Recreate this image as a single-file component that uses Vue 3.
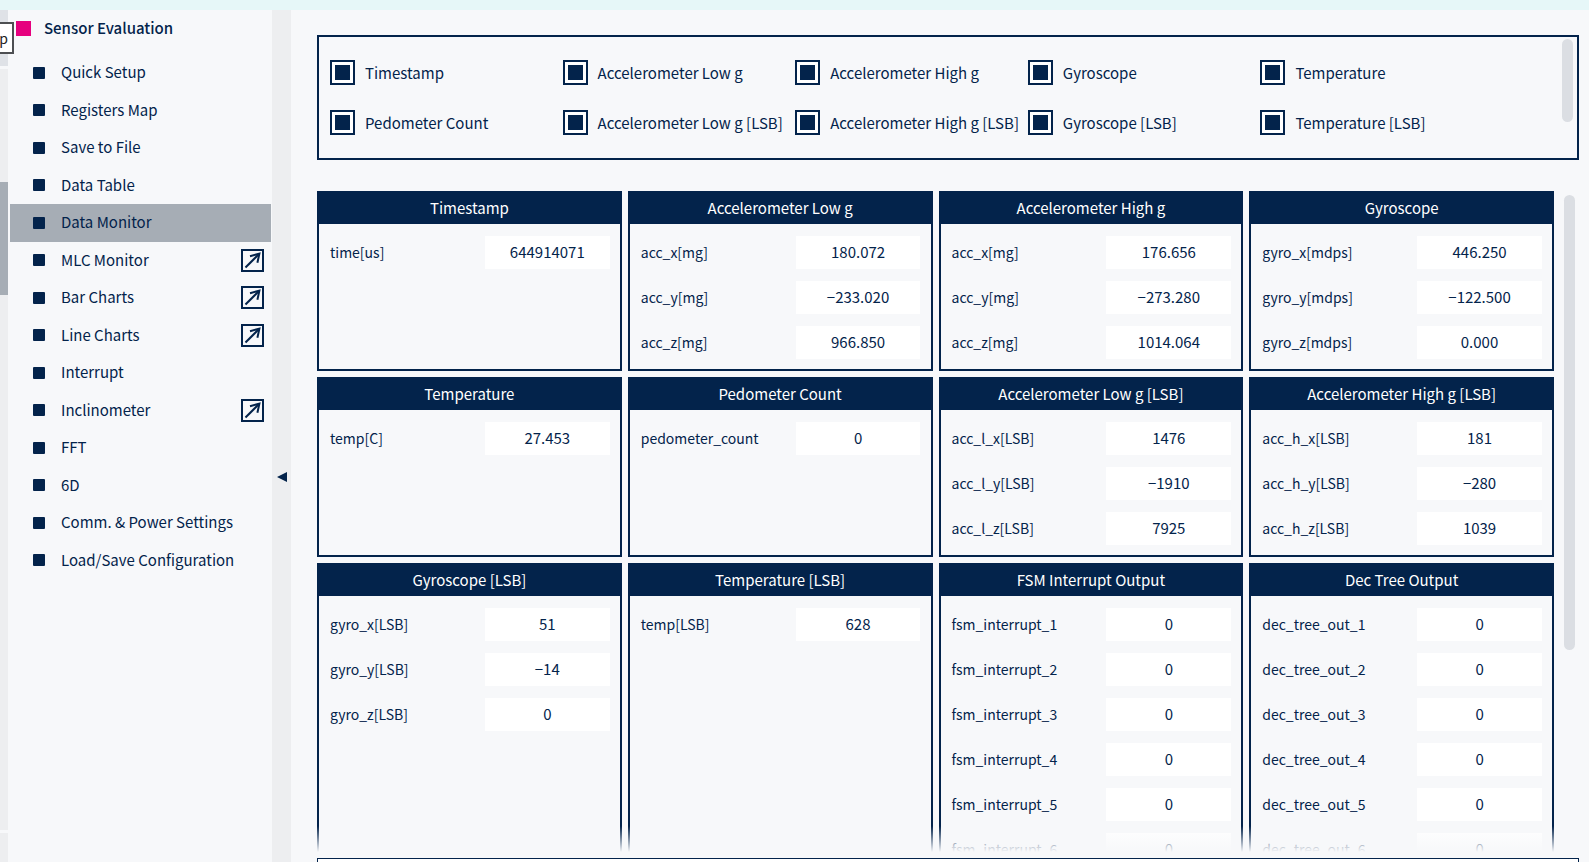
<template>
  <div class="app">
    <div class="top-strip"></div>
    <div class="workspace">
      <div class="outer-rail">
        <div class="rail-head"></div>
        <div class="rail-track">
          <div class="rail-thumb"></div>
        </div>
        <div class="rail-foot"></div>
        <div class="tooltip">p</div>
      </div>

      <aside class="sidebar">
        <h1 class="sidebar-title">Sensor Evaluation</h1>
        <nav class="menu">
          <a
            v-for="item in menu"
            :key="item.name"
            href="#"
            class="menu-item"
            :class="{ active: item.name === current }"
            @click.prevent="current = item.name"
          >
            <span class="bullet"></span>
            <span class="menu-name">{{ item.name }}</span>
            <svg v-if="item.popup" class="popup-icon" viewBox="0 0 23 23" aria-hidden="true">
              <rect x="1" y="1" width="21" height="21" />
              <path class="shaft" d="M4.5 18.5L18 5" />
              <path class="head" d="M9 7.2L18.4 4.6L16.4 13.8" />
            </svg>
          </a>
        </nav>
      </aside>

      <button class="splitter" aria-label="Collapse menu">
        <svg class="splitter-icon" viewBox="0 0 10 10" aria-hidden="true">
          <path d="M10 0V10L0 5Z" />
        </svg>
      </button>

      <main class="monitor">
        <section class="selector">
          <label v-for="name in channels" :key="name" class="channel">
            <input v-model="selected" type="checkbox" :value="name" />
            <span>{{ name }}</span>
          </label>
          <div class="selector-scroll"></div>
        </section>

        <div class="board">
          <div class="cards">
            <section v-for="(card, ci) in cards" :key="card.title" class="card">
              <h2 class="card-title">{{ card.title }}</h2>
              <div class="card-body">
                <div v-for="(row, ri) in card.rows" :key="row[0]" class="field">
                  <label :for="`f-${ci}-${ri}`">{{ row[0] }}</label>
                  <input :id="`f-${ci}-${ri}`" type="text" :value="row[1]" readonly />
                </div>
              </div>
            </section>
          </div>
          <div class="board-scroll"></div>
        </div>

        <div class="log-panel"></div>
      </main>
    </div>
  </div>
</template>

<script setup>
import { ref } from 'vue'

const current = ref('Data Monitor')

const menu = [
  { name: 'Quick Setup' },
  { name: 'Registers Map' },
  { name: 'Save to File' },
  { name: 'Data Table' },
  { name: 'Data Monitor' },
  { name: 'MLC Monitor', popup: true },
  { name: 'Bar Charts', popup: true },
  { name: 'Line Charts', popup: true },
  { name: 'Interrupt' },
  { name: 'Inclinometer', popup: true },
  { name: 'FFT' },
  { name: '6D' },
  { name: 'Comm. & Power Settings' },
  { name: 'Load/Save Configuration' }
]

const channels = [
  'Timestamp',
  'Accelerometer Low g',
  'Accelerometer High g',
  'Gyroscope',
  'Temperature',
  'Pedometer Count',
  'Accelerometer Low g [LSB]',
  'Accelerometer High g [LSB]',
  'Gyroscope [LSB]',
  'Temperature [LSB]'
]
const selected = ref([...channels])

const zeros = (prefix, count) =>
  Array.from({ length: count }, (_, i) => [`${prefix}_${i + 1}`, '0'])

const cards = [
  { title: 'Timestamp', rows: [['time[us]', '644914071']] },
  {
    title: 'Accelerometer Low g',
    rows: [['acc_x[mg]', '180.072'], ['acc_y[mg]', '−233.020'], ['acc_z[mg]', '966.850']]
  },
  {
    title: 'Accelerometer High g',
    rows: [['acc_x[mg]', '176.656'], ['acc_y[mg]', '−273.280'], ['acc_z[mg]', '1014.064']]
  },
  {
    title: 'Gyroscope',
    rows: [['gyro_x[mdps]', '446.250'], ['gyro_y[mdps]', '−122.500'], ['gyro_z[mdps]', '0.000']]
  },
  { title: 'Temperature', rows: [['temp[C]', '27.453']] },
  { title: 'Pedometer Count', rows: [['pedometer_count', '0']] },
  {
    title: 'Accelerometer Low g [LSB]',
    rows: [['acc_l_x[LSB]', '1476'], ['acc_l_y[LSB]', '−1910'], ['acc_l_z[LSB]', '7925']]
  },
  {
    title: 'Accelerometer High g [LSB]',
    rows: [['acc_h_x[LSB]', '181'], ['acc_h_y[LSB]', '−280'], ['acc_h_z[LSB]', '1039']]
  },
  {
    title: 'Gyroscope [LSB]',
    rows: [['gyro_x[LSB]', '51'], ['gyro_y[LSB]', '−14'], ['gyro_z[LSB]', '0']]
  },
  { title: 'Temperature [LSB]', rows: [['temp[LSB]', '628']] },
  { title: 'FSM Interrupt Output', rows: zeros('fsm_interrupt', 6) },
  { title: 'Dec Tree Output', rows: zeros('dec_tree_out', 6) }
]
</script>

<style>
body {
  margin: 0;
}
</style>

<style scoped>
.app {
  --navy: #03234b;
  --bg: #f7f8fa;
  --rail: #edeef0;
  --thumb: #dbdee3;
  --grey: #a6adb5;

  height: 100vh;
  display: flex;
  flex-direction: column;
  overflow: hidden;
  background: var(--bg);
  color: var(--navy);
  font-family: "Noto Sans CJK JP", sans-serif;
  font-size: 15px;
  line-height: 20px;
}

.app *,
.app *::before,
.app *::after {
  box-sizing: border-box;
}

.top-strip {
  height: 10px;
  flex-shrink: 0;
  background: #e6f7f8;
}

.workspace {
  flex: 1;
  min-height: 0;
  display: flex;
}

/* right edge of the neighbouring pane */
.outer-rail {
  position: relative;
  width: 8px;
  flex-shrink: 0;
  display: flex;
  flex-direction: column;
  gap: 3px;
}

.rail-head {
  height: 56px;
  background: #dfe2e7;
}

.rail-track {
  flex: 1;
  padding-top: 113px;
  background: var(--rail);
}

.rail-thumb {
  height: 113px;
  background: var(--grey);
}

.rail-foot {
  height: 29px;
  background: var(--rail);
}

.tooltip {
  position: absolute;
  top: 12px;
  left: 0;
  width: 14px;
  height: 32px;
  padding-right: 4px;
  display: flex;
  align-items: center;
  justify-content: flex-end;
  background: #fff;
  border: 2px solid #4d4f52;
  border-left: 0;
  color: #222;
  font-size: 14px;
}

.sidebar {
  width: 264px;
  flex-shrink: 0;
}

.sidebar-title {
  height: 44px;
  margin: 0;
  padding: 0 0 8px 8px;
  display: flex;
  align-items: center;
  gap: 13px;
  font-size: 15px;
  font-weight: 500;
}

.sidebar-title::before {
  content: "";
  width: 15px;
  height: 15px;
  background: #e6007e;
}

.menu {
  height: 525px;
  margin: 0 1px 0 2px;
  display: grid;
  grid-auto-rows: 1fr;
}

.menu-item {
  display: flex;
  align-items: center;
  gap: 16px;
  padding: 0 7px 0 23px;
  color: inherit;
  text-decoration: none;
}

.menu-item.active {
  background: var(--grey);
}

.bullet {
  width: 12px;
  height: 12px;
  border-radius: 1px;
  background: var(--navy);
}

.menu-name {
  flex: 1;
  padding-bottom: 1px;
}

.popup-icon {
  width: 23px;
  height: 23px;
  fill: none;
  stroke: var(--navy);
  stroke-width: 2;
}

.splitter {
  width: 19px;
  flex-shrink: 0;
  padding: 82px 0 0;
  border: 0;
  background: var(--rail);
  cursor: pointer;
}

.splitter-icon {
  width: 10px;
  height: 10px;
  fill: var(--navy);
}

.monitor {
  flex: 1;
  min-width: 0;
  padding: 25px 10px 0 26px;
  display: flex;
  flex-direction: column;
}

.selector {
  position: relative;
  height: 125px;
  flex-shrink: 0;
  padding: 23px 84px 0 11px;
  display: grid;
  grid-template-columns: repeat(5, 1fr);
  grid-auto-rows: 25px;
  row-gap: 25px;
  border: 2px solid var(--navy);
}

.channel {
  min-width: 0;
  display: flex;
  align-items: center;
  gap: 10px;
  white-space: nowrap;
}

.channel input {
  appearance: none;
  width: 25px;
  height: 25px;
  flex-shrink: 0;
  margin: 0;
  border: 2px solid var(--navy);
  background: #fff;
}

.channel input:checked {
  box-shadow: inset 0 0 0 3px #fff;
  background: var(--navy);
}

.selector-scroll {
  position: absolute;
  top: 2px;
  right: 4px;
  width: 11px;
  height: 83px;
  border-radius: 6px;
  background: var(--thumb);
}

.board {
  position: relative;
  flex: 1;
  min-height: 0;
  margin: 31px 0 6px;
  display: flex;
  align-items: flex-start;
  gap: 10px;
  padding-right: 4px;
  overflow: hidden;
}

/* fade where the cards run under the log panel */
.board::after {
  content: "";
  position: absolute;
  inset: auto 0 0;
  height: 26px;
  background: linear-gradient(rgba(247, 248, 250, 0), var(--bg));
}

.cards {
  flex: 1;
  display: grid;
  grid-template-columns: repeat(4, 1fr);
  gap: 6px;
}

.card {
  min-height: 180px;
  border: 2px solid var(--navy);
}

.card-title {
  height: 31px;
  margin: 0;
  padding-bottom: 2px;
  display: flex;
  align-items: center;
  justify-content: center;
  background: var(--navy);
  color: #fff;
  font-size: 15px;
  font-weight: 400;
}

.card-body {
  padding: 12px 10px 10px 11px;
  display: grid;
  gap: 12px;
}

.field {
  display: grid;
  grid-template-columns: 155fr 125fr;
  align-items: center;
}

.field label {
  padding-bottom: 2px;
  font-size: 14px;
}

.field input {
  width: 100%;
  min-width: 0;
  height: 33px;
  padding: 0 0 2px;
  border: 0;
  background: #fff;
  color: inherit;
  font: inherit;
  text-align: center;
}

.board-scroll {
  width: 11px;
  height: 455px;
  margin-top: 4px;
  border-radius: 6px;
  background: var(--thumb);
}

.log-panel {
  height: 4px;
  flex-shrink: 0;
  border: 1px solid var(--navy);
  border-bottom: 0;
  background: #fff;
}
</style>
